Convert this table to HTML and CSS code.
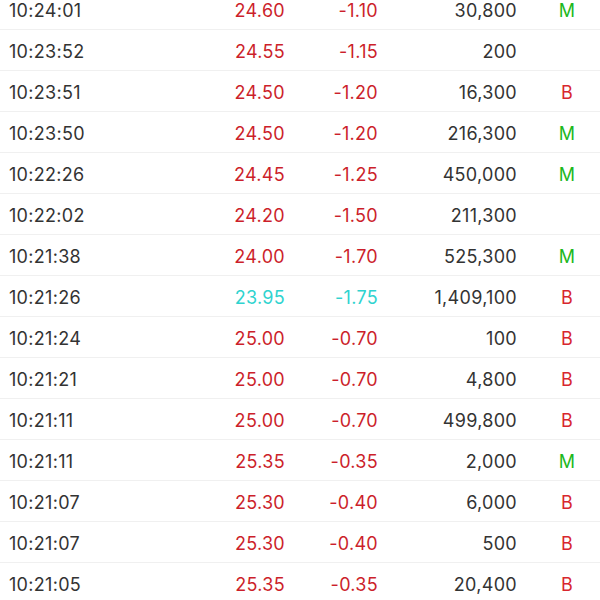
FILE: index.html
```html
<!DOCTYPE html>
<html>
<head>
<meta charset="utf-8">
<link rel="stylesheet" href="styles.css">
</head>
<body>
<div class="list">
  <div class="row"><span class="time">10:24:01</span><span class="price up">24.60</span><span class="chg up">-1.10</span><span class="vol">30,800</span><span class="flag m">M</span></div>
  <div class="row"><span class="time">10:23:52</span><span class="price up">24.55</span><span class="chg up">-1.15</span><span class="vol">200</span><span class="flag"></span></div>
  <div class="row"><span class="time">10:23:51</span><span class="price up">24.50</span><span class="chg up">-1.20</span><span class="vol">16,300</span><span class="flag b">B</span></div>
  <div class="row"><span class="time">10:23:50</span><span class="price up">24.50</span><span class="chg up">-1.20</span><span class="vol">216,300</span><span class="flag m">M</span></div>
  <div class="row"><span class="time">10:22:26</span><span class="price up">24.45</span><span class="chg up">-1.25</span><span class="vol">450,000</span><span class="flag m">M</span></div>
  <div class="row"><span class="time">10:22:02</span><span class="price up">24.20</span><span class="chg up">-1.50</span><span class="vol">211,300</span><span class="flag"></span></div>
  <div class="row"><span class="time">10:21:38</span><span class="price up">24.00</span><span class="chg up">-1.70</span><span class="vol">525,300</span><span class="flag m">M</span></div>
  <div class="row"><span class="time">10:21:26</span><span class="price low">23.95</span><span class="chg low">-1.75</span><span class="vol">1,409,100</span><span class="flag b">B</span></div>
  <div class="row"><span class="time">10:21:24</span><span class="price up">25.00</span><span class="chg up">-0.70</span><span class="vol">100</span><span class="flag b">B</span></div>
  <div class="row"><span class="time">10:21:21</span><span class="price up">25.00</span><span class="chg up">-0.70</span><span class="vol">4,800</span><span class="flag b">B</span></div>
  <div class="row"><span class="time">10:21:11</span><span class="price up">25.00</span><span class="chg up">-0.70</span><span class="vol">499,800</span><span class="flag b">B</span></div>
  <div class="row"><span class="time">10:21:11</span><span class="price up">25.35</span><span class="chg up">-0.35</span><span class="vol">2,000</span><span class="flag m">M</span></div>
  <div class="row"><span class="time">10:21:07</span><span class="price up">25.30</span><span class="chg up">-0.40</span><span class="vol">6,000</span><span class="flag b">B</span></div>
  <div class="row"><span class="time">10:21:07</span><span class="price up">25.30</span><span class="chg up">-0.40</span><span class="vol">500</span><span class="flag b">B</span></div>
  <div class="row"><span class="time">10:21:05</span><span class="price up">25.35</span><span class="chg up">-0.35</span><span class="vol">20,400</span><span class="flag b">B</span></div>
</div>
</body>
</html>
```
FILE: styles.css
```css
html, body {
  margin: 0;
  padding: 0;
  background: #ffffff;
  overflow: hidden;
}
body {
  font-family: Inter, "Liberation Sans", sans-serif;
  font-size: 18px;
  letter-spacing: 0.3px;
  color: #333333;
}
.list {
  margin-top: -11px;
}
.row {
  display: grid;
  grid-template-columns: 150px 126px 93px 139px 1fr;
  align-items: center;
  height: 37px;
  padding-top: 3px;
  padding-left: 9px;
  border-bottom: 1px solid #f0f0f0;
}
.time { text-align: left; }
.price, .chg, .vol { text-align: right; }
.flag {
  text-align: center;
  padding-left: 17px;
}
.up { color: #cc1f2b; }
.low { color: #2fd3cf; }
.m { color: #1db81d; }
.b { color: #d8262e; }
```
